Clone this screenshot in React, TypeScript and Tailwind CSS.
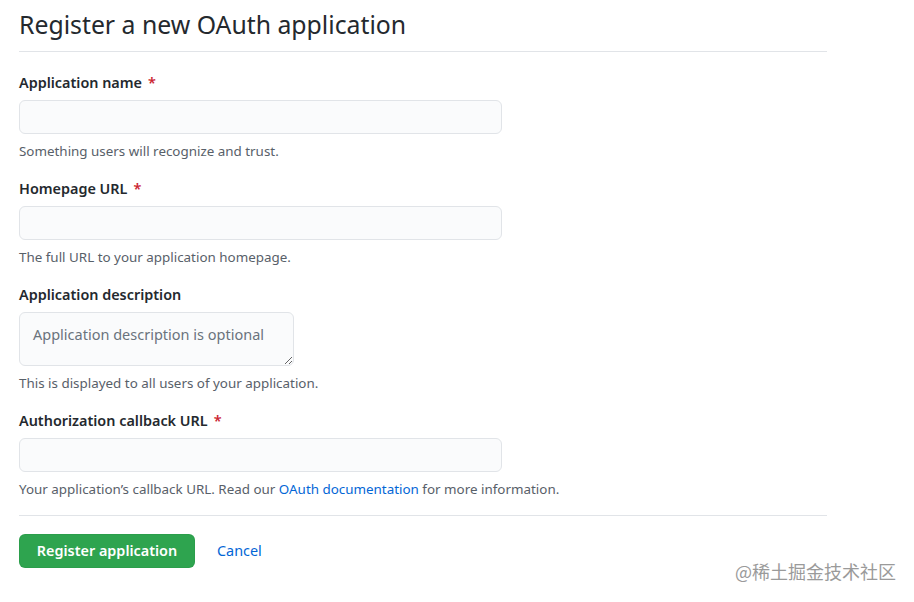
import React from "react";

function Label({ children, required }: { children: React.ReactNode; required?: boolean }) {
  return (
    <label className="block text-[14.4px] font-semibold leading-[20px] text-[#24292e]">
      {children}
      {required && <span className="ml-[6px] text-[#cb2431]">*</span>}
    </label>
  );
}

function Hint({ children }: { children: React.ReactNode }) {
  return <p className="mt-[7px] text-[13.4px] leading-[20px] text-[#586069]">{children}</p>;
}

function TextInput() {
  return (
    <input
      type="text"
      className="mt-[7px] block h-[34px] w-[483px] rounded-[6px] border border-[#e1e4e8] bg-[#fafbfc] px-3 text-[14px] outline-none"
    />
  );
}

export default function App() {
  return (
    <div
      className="relative h-[602px] w-[914px] overflow-hidden bg-white"
      style={{ fontFamily: '"Noto Sans", "Open Sans", "Liberation Sans", sans-serif' }}
    >
      <div className="w-[827px] pl-[19px] pt-[6px]">
        <h1 className="border-b border-[#e1e4e8] pb-[9px] text-[24.8px] font-normal leading-[36px] text-[#24292e]">
          Register a new OAuth application
        </h1>

        <div className="mt-[21px]">
          <Label required>Application name</Label>
          <TextInput />
          <Hint>Something users will recognize and trust.</Hint>
        </div>

        <div className="mt-[18px]">
          <Label required>Homepage URL</Label>
          <TextInput />
          <Hint>The full URL to your application homepage.</Hint>
        </div>

        <div className="mt-[18px]">
          <Label>Application description</Label>
          <textarea
            placeholder="Application description is optional"
            className="mt-[7px] block h-[54px] w-[275px] rounded-[6px] border border-[#e1e4e8] bg-[#fafbfc] px-[13px] py-[10px] text-[14.5px] leading-[22px] text-[#24292e] outline-none placeholder:text-[#6a737d]"
          />
          <Hint>This is displayed to all users of your application.</Hint>
        </div>

        <div className="mt-[18px]">
          <Label required>Authorization callback URL</Label>
          <TextInput />
          <Hint>
            Your application’s callback URL. Read our{" "}
            <a className="text-[#0366d6]">OAuth documentation</a> for more information.
          </Hint>
        </div>

        <div className="mt-[16px] border-t border-[#e1e4e8] pt-[18px]">
          <div className="flex items-center">
            <button className="h-[34px] w-[176px] rounded-[6px] border border-[#22863a]/20 bg-[#2ea44f] text-[14.4px] font-semibold text-white">
              Register application
            </button>
            <a className="ml-[22px] text-[14.4px] text-[#0366d6]">Cancel</a>
          </div>
        </div>
      </div>

      <div
        className="absolute right-[18px] top-[558px] text-[18px] text-[#9a9a9a]"
        style={{ fontFamily: '"Noto Sans CJK SC", sans-serif' }}
      >
        @稀土掘金技术社区
      </div>
    </div>
  );
}
